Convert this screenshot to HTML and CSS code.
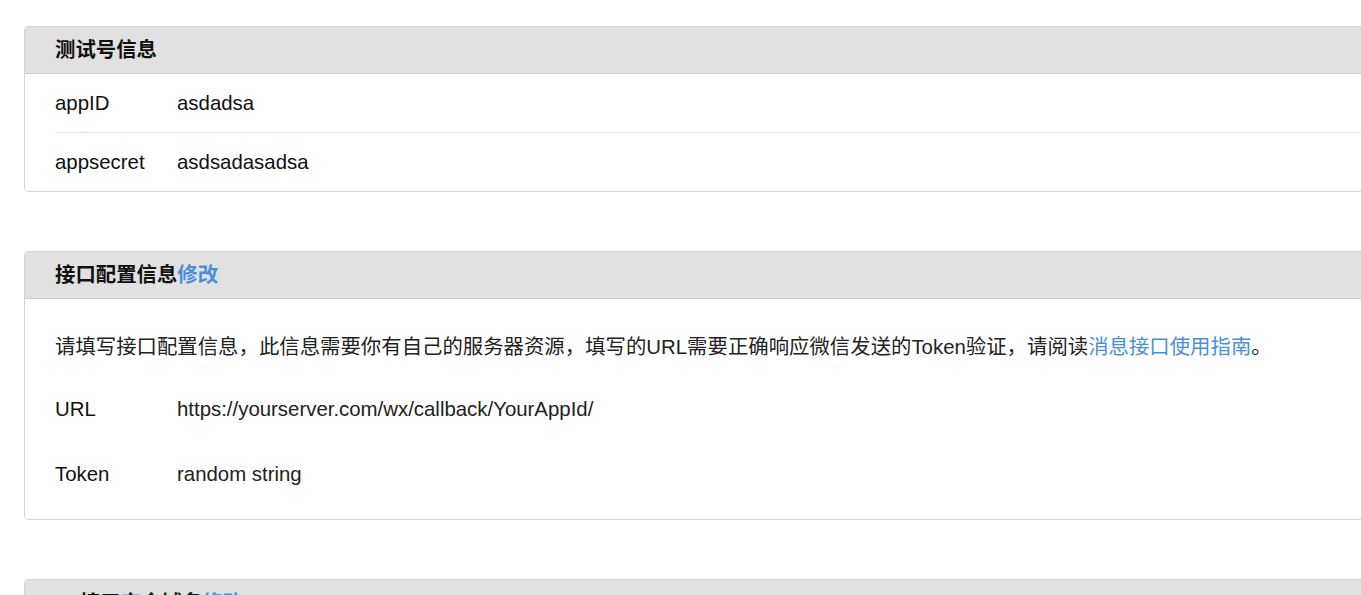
FILE: index.html
```html
<!DOCTYPE html>
<html lang="zh-CN">
<head>
<meta charset="utf-8">
<title>测试号信息</title>
<link rel="stylesheet" href="styles.css">
</head>
<body>
<div class="page">
  <section class="panel">
    <div class="panel-head">测试号信息</div>
    <div class="panel-body">
      <div class="row sep"><span class="label">appID</span><span class="value">asdadsa</span></div>
      <div class="row"><span class="label">appsecret</span><span class="value">asdsadasadsa</span></div>
    </div>
  </section>

  <section class="panel">
    <div class="panel-head">接口配置信息<a class="link" href="#">修改</a></div>
    <div class="panel-body padded">
      <div class="line">请填写接口配置信息，此信息需要你有自己的服务器资源，填写的URL需要正确响应微信发送的Token验证，请阅读<a class="link normal" href="#">消息接口使用指南</a>。</div>
      <div class="line"><span class="label">URL</span><span class="value">https://yourserver.com/wx/callback/YourAppId/</span></div>
      <div class="line"><span class="label">Token</span><span class="value">random string</span></div>
    </div>
  </section>

  <section class="panel">
    <div class="panel-head">JS接口安全域名<a class="link" href="#">修改</a></div>
    <div class="panel-body padded">
      <div class="line">设置JS接口安全域名后，公众号开发者可在该域名下调用微信开放的JS接口。</div>
    </div>
  </section>
</div>
</body>
</html>
```

FILE: styles.css
```css
html, body {
  margin: 0;
  padding: 0;
  background: #fff;
  overflow: hidden;
}
body {
  font-family: "Liberation Sans", Arial, "Noto Sans CJK SC", sans-serif;
  font-size: 20.4px;
  color: #111;
}
.page {
  padding: 26px 0 0 24px;
  width: 1420px;
}
.panel {
  border: 1px solid #d4d4d4;
  border-radius: 4px;
  margin-bottom: 59px;
  overflow: hidden;
}
.panel-head {
  background: #e1e1e1;
  border-bottom: 1px solid #cfcfcf;
  height: 46px;
  line-height: 46px;
  padding-left: 30px;
  font-weight: bold;
  color: #111;
}
.link {
  color: #4a90d9;
  text-decoration: none;
}
.link.normal {
  font-weight: normal;
}
.panel-body {
  padding-left: 30px;
}
.row {
  display: flex;
  align-items: center;
  height: 58px;
}
.row.sep {
  border-bottom: 1px solid #e3e3e3;
}
.label {
  width: 122px;
  flex: none;
}
.padded {
  padding-top: 13px;
  padding-bottom: 12px;
}
.line {
  display: flex;
  align-items: center;
  height: 65px;
  white-space: nowrap;
  color: #222;
}
.line .label, .row .label { color: #111; }
```
